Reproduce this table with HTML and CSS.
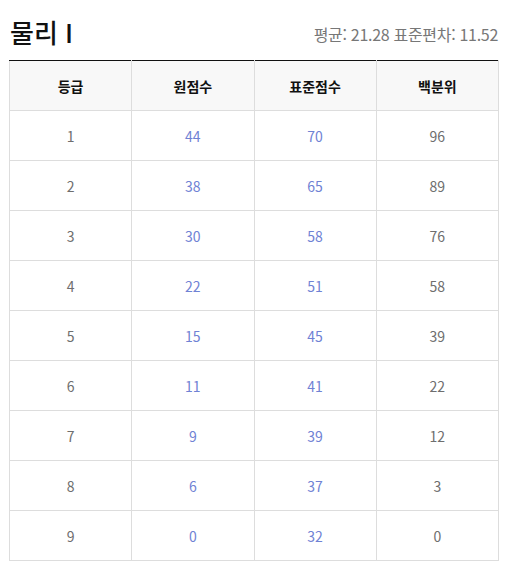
FILE: index.html
```html
<!DOCTYPE html>
<html lang="ko">
<head>
<meta charset="utf-8">
<link rel="stylesheet" href="styles.css">
</head>
<body>
<div class="wrap">
  <div class="head">
    <h1 class="title">물리 I</h1>
    <div class="stats">평균: 21.28 표준편차: 11.52</div>
  </div>
  <table class="grades">
    <thead>
      <tr><th>등급</th><th>원점수</th><th>표준점수</th><th>백분위</th></tr>
    </thead>
    <tbody>
      <tr><td>1</td><td class="b">44</td><td class="b">70</td><td>96</td></tr>
      <tr><td>2</td><td class="b">38</td><td class="b">65</td><td>89</td></tr>
      <tr><td>3</td><td class="b">30</td><td class="b">58</td><td>76</td></tr>
      <tr><td>4</td><td class="b">22</td><td class="b">51</td><td>58</td></tr>
      <tr><td>5</td><td class="b">15</td><td class="b">45</td><td>39</td></tr>
      <tr><td>6</td><td class="b">11</td><td class="b">41</td><td>22</td></tr>
      <tr><td>7</td><td class="b">9</td><td class="b">39</td><td>12</td></tr>
      <tr><td>8</td><td class="b">6</td><td class="b">37</td><td>3</td></tr>
      <tr><td>9</td><td class="b">0</td><td class="b">32</td><td>0</td></tr>
    </tbody>
  </table>
</div>
</body>
</html>
```

FILE: styles.css
```css
html, body {
  margin: 0;
  padding: 0;
  background: #fff;
}
body {
  font-family: "Noto Sans CJK KR", "Noto Sans", sans-serif;
  color: #666;
}
.wrap {
  padding: 0 8px 0 9px;
}
.head {
  display: flex;
  justify-content: space-between;
  align-items: flex-end;
  height: 47px;
  margin-bottom: 13px;
}
.title {
  margin: 0 0 0 1px;
  font-size: 26px;
  font-weight: 500;
  color: #111;
  line-height: 30px;
}
.stats {
  font-size: 16px;
  color: #777;
  font-weight: 400;
  line-height: 20px;
  margin-bottom: 3px;
  letter-spacing: -0.3px;
}
.grades {
  width: 490px;
  border-collapse: collapse;
  table-layout: fixed;
  border-top: 1px solid #111;
}
.grades th, .grades td {
  border: 1px solid #ddd;
  text-align: center;
  font-size: 14px;
  height: 49px;
  padding: 0;
}
.grades thead th {
  border-top: 1px solid #111;
}
.grades th {
  background: #f8f8f8;
  color: #111;
  font-weight: 700;
}
.grades td {
  color: #6e6e6e;
  font-weight: 400;
}
.grades td.b {
  color: #6f82d4;
}
```
